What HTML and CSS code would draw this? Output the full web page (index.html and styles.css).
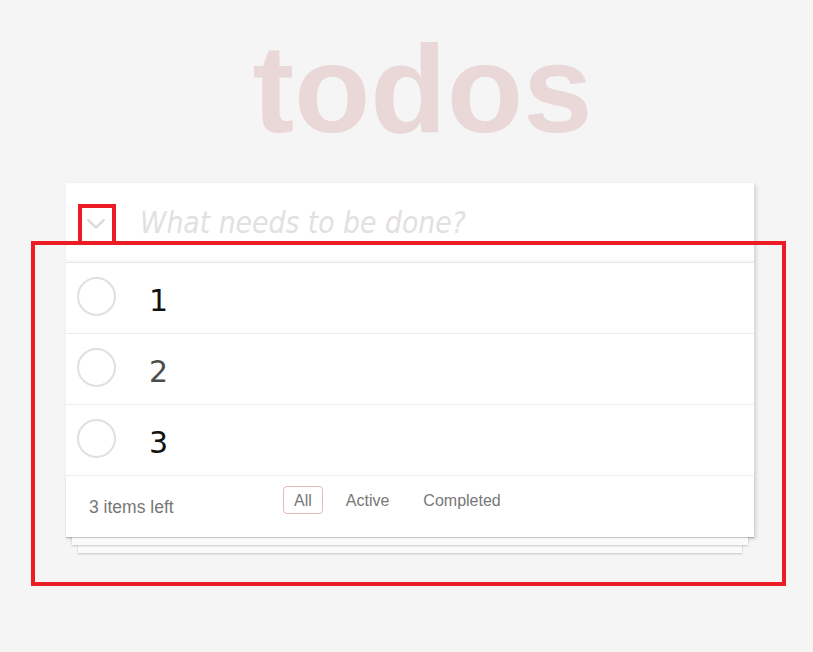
FILE: index.html
```html
<!DOCTYPE html>
<html lang="en">
<head>
<meta charset="utf-8">
<title>todos</title>
<link rel="stylesheet" href="styles.css">
</head>
<body>
<div class="app">
  <h1 class="title">todos</h1>
  <section class="todoapp">
    <header class="head">
      <span class="toggle-all">
        <svg width="20" height="11" viewBox="0 0 20 11"><polyline points="1.5,1.5 10,9.5 18.5,1.5" fill="none" stroke="#d9d9d9" stroke-width="2.4"/></svg>
      </span>
      <input class="new-todo" placeholder="What needs to be done?">
    </header>
    <ul class="list">
      <li class="item"><span class="check"></span><label class="text">1</label></li>
      <li class="item"><span class="check"></span><label class="text grey">2</label></li>
      <li class="item"><span class="check"></span><label class="text">3</label></li>
    </ul>
    <footer class="foot">
      <span class="count">3 items left</span>
      <ul class="filters">
        <li><a class="filter selected">All</a></li>
        <li><a class="filter">Active</a></li>
        <li><a class="filter">Completed</a></li>
      </ul>
    </footer>
  </section>
</div>
<div class="mark mark-toggle"></div>
<div class="mark mark-list"></div>
</body>
</html>
```

FILE: styles.css
```css
html, body {
  margin: 0;
  padding: 0;
}
body {
  background: #f5f5f5;
  font-family: "Liberation Sans", Arial, sans-serif;
  min-height: 652px;
  position: relative;
}
.app {
  width: 688px;
  margin-left: 66px;
  padding-top: 26px;
}
.title {
  margin: 0 0 32px 0;
  padding-left: 25px;
  text-align: center;
  font-family: "Liberation Sans", Arial, sans-serif;
  font-weight: bold;
  font-size: 125px;
  line-height: 125px;
  color: #ead7d7;
}
.todoapp {
  background: #fff;
  position: relative;
  box-shadow: 2px 2px 4px rgba(0, 0, 0, 0.15);
}
.head {
  display: flex;
  align-items: flex-start;
  height: 80px;
  box-sizing: border-box;
  padding-top: 22px;
  border-bottom: 1px solid #e6e6e6;
  box-shadow: inset 0 -2px 1px rgba(0, 0, 0, 0.03);
}
.toggle-all {
  display: block;
  width: 20px;
  height: 11px;
  margin: 13px 0 0 20px;
}
.toggle-all svg {
  display: block;
}
.new-todo {
  flex: 1;
  margin: 0 0 0 34px;
  padding: 0;
  height: 36px;
  border: none;
  outline: none;
  background: transparent;
  font-family: "DejaVu Sans Condensed", "DejaVu Sans", sans-serif;
  font-stretch: condensed;
  font-size: 29.7px;
  line-height: 36px;
  color: #4d4d4d;
}
.new-todo::placeholder {
  font-style: italic;
  color: #e3e0e0;
}
.list {
  list-style: none;
  margin: 0;
  padding: 0;
}
.item {
  display: flex;
  align-items: flex-start;
  height: 71px;
  box-sizing: border-box;
  border-bottom: 1px solid #ededed;
}
.check {
  display: block;
  width: 39px;
  height: 39px;
  box-sizing: border-box;
  margin: 14px 0 0 11px;
  border: 2px solid #e0e0e0;
  border-radius: 50%;
}
.text {
  display: block;
  margin-left: 33px;
  padding-top: 20px;
  font-family: "DejaVu Sans", sans-serif;
  font-size: 30px;
  line-height: 36px;
  color: #111;
}
.text.grey {
  color: #4d4d4d;
}
.foot {
  position: relative;
  display: flex;
  align-items: flex-start;
  height: 61px;
  box-sizing: border-box;
  padding: 10px 0 0 23px;
  color: #777;
}
.foot::before {
  content: "";
  position: absolute;
  left: 0;
  right: 0;
  top: 0;
  bottom: 0;
  box-shadow: 0 1px 1px rgba(0, 0, 0, 0.2),
    0 14px 0 -6px #fafafa,
    0 15px 2px -6px rgba(0, 0, 0, 0.2),
    0 28px 0 -12px #fafafa,
    0 29px 2px -12px rgba(0, 0, 0, 0.2);
}
.count {
  position: relative;
  display: block;
  width: 188px;
  margin-top: 11px;
  font-size: 17.5px;
  line-height: 20px;
}
.filters {
  position: relative;
  display: flex;
  list-style: none;
  margin: 0;
  padding: 0;
}
.filters li {
  margin: 0 6px;
}
.filter {
  display: block;
  padding: 5px 10px 3px 10px;
  border: 1px solid transparent;
  border-radius: 4px;
  font-size: 16px;
  line-height: 18px;
  color: #777;
}
.filter.selected {
  border-color: #e4b9b9;
}
.mark {
  position: absolute;
  box-sizing: border-box;
  border: 4px solid #ec1c24;
}
.mark-toggle {
  left: 78px;
  top: 204px;
  width: 38px;
  height: 41px;
}
.mark-list {
  left: 31px;
  top: 241px;
  width: 755px;
  height: 345px;
}
```
